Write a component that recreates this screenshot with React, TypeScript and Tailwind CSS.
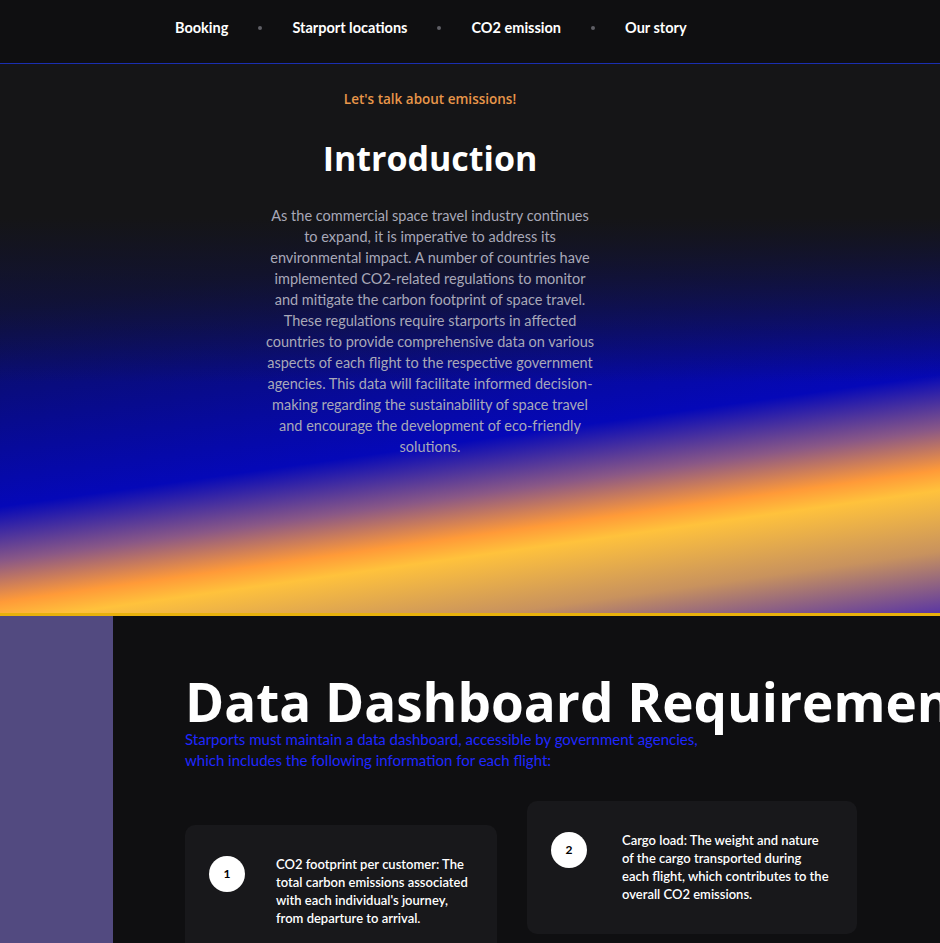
const links = ["Booking", "Starport locations", "CO2 emission", "Our story"];

const items = [
  {
    n: 1,
    text: "CO2 footprint per customer: The total carbon emissions associated with each individual's journey, from departure to arrival.",
    box: "mt-[24px] w-[312px] gap-[31px] pr-[22px]",
  },
  {
    n: 2,
    text: "Cargo load: The weight and nature of the cargo transported during each flight, which contributes to the overall CO2 emissions.",
    box: "w-[330px] gap-[35px] pr-[27px]",
  },
];

export default function App() {
  return (
    <div className="min-h-screen overflow-hidden bg-[#0f0f11] font-['Lato',sans-serif] text-white">
      <nav className="flex h-[64px] items-center gap-[30px] border-b border-[#1b2fb0] pb-[8px] pl-[175px]">
        {links.map((link, i) => (
          <div key={link} className="flex items-center gap-[30px]">
            {i > 0 && <span className="h-[4px] w-[4px] rounded-full bg-[#5f5f66]" />}
            <a href="#" className="text-[14.5px] font-bold text-white">
              {link}
            </a>
          </div>
        ))}
      </nav>

      <section className="h-[552px] border-b-[3px] border-[#e8b10c] bg-[linear-gradient(180deg,#151517_0%,#151517_28%,rgba(21,21,23,0)_58%),linear-gradient(172deg,#10123a_0%,#0c0f55_36%,#0508b8_65%,#8a5886_73%,#ff9a38_79%,#ffc23c_82%,#c8925e_91%,#5b37a3_100%)] pr-[80px] pt-[26px]">
        <div className="mx-auto flex w-[332px] flex-col items-center text-center">
          <p className="font-['Open_Sans',sans-serif] text-[13.5px] font-semibold leading-[18px] text-[#e8964a]">
            Let's talk about emissions!
          </p>
          <h1 className="mt-[30px] font-['Open_Sans',sans-serif] text-[34px] font-bold leading-[40px] text-white">
            Introduction
          </h1>
          <p className="mt-[27px] text-[14.5px] leading-[21px] text-[#a8a8b8]">
            As the commercial space travel industry continues to expand, it is imperative to address its
            environmental impact. A number of countries have implemented CO2-related regulations to monitor and
            mitigate the carbon footprint of space travel. These regulations require starports in affected countries
            to provide comprehensive data on various aspects of each flight to the respective government agencies.
            This data will facilitate informed decision-making regarding the sustainability of space travel and
            encourage the development of eco-friendly solutions.
          </p>
        </div>
      </section>

      <section className="flex min-h-[400px]">
        <div className="w-[113px] shrink-0 bg-[#524a80]" />
        <div className="min-w-0 flex-1 pl-[72px] pt-[58px]">
          <h2 className="whitespace-nowrap font-['Open_Sans',sans-serif] text-[53px] font-bold leading-[55px] text-white">
            Data Dashboard Requirements
          </h2>
          <p className="w-[530px] text-[15px] leading-[21px] text-[#1f27ff]">
            Starports must maintain a data dashboard, accessible by government agencies, which includes the following
            information for each flight:
          </p>
          <div className="mt-[30px] flex items-start gap-[30px]">
            {items.map((item) => (
              <Card key={item.n} n={item.n} text={item.text} className={item.box} />
            ))}
          </div>
        </div>
      </section>
    </div>
  );
}

function Card({ n, text, className }: { n: number; text: string; className: string }) {
  return (
    <div className={`flex items-start rounded-[10px] bg-[#18181b] py-[31px] pl-[24px] ${className}`}>
      <span className="flex h-[36px] w-[36px] shrink-0 items-center justify-center rounded-full bg-white text-[12px] font-bold text-black">
        {n}
      </span>
      <p className="-mt-[1px] min-w-0 flex-1 text-[13px] font-semibold leading-[18px] text-white">{text}</p>
    </div>
  );
}
